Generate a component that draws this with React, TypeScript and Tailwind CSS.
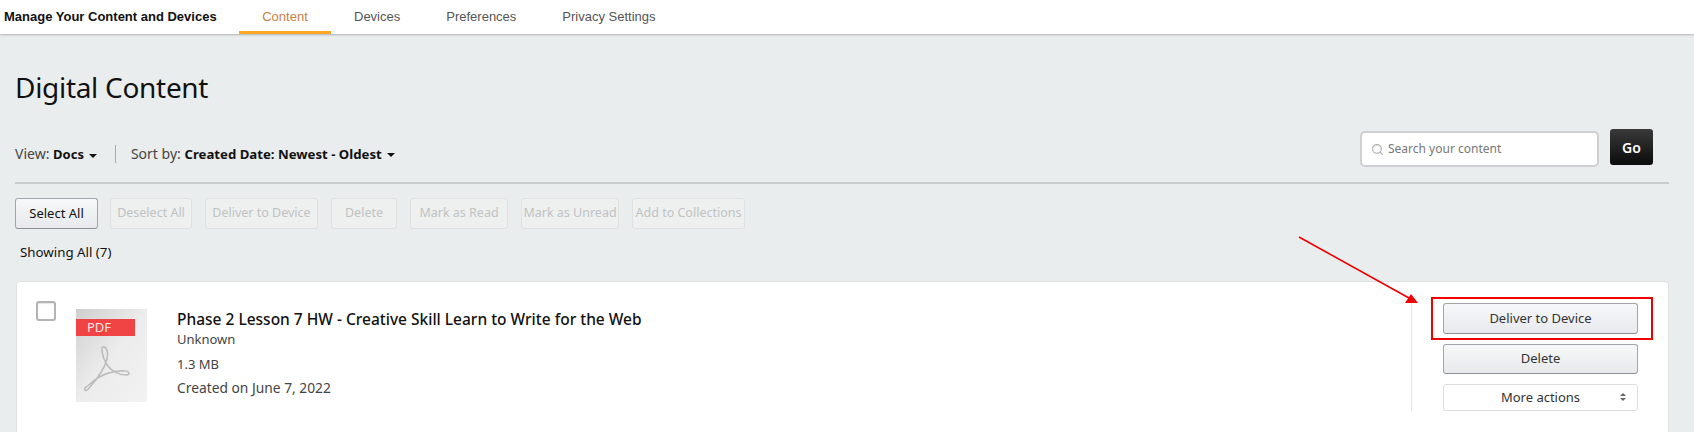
import { Search } from 'lucide-react';

const bulkActions = [
  { label: 'Deselect All', width: 'w-[82px]' },
  { label: 'Deliver to Device', width: 'w-[113px]' },
  { label: 'Delete', width: 'w-[66px]' },
  { label: 'Mark as Read', width: 'w-[98px]' },
  { label: 'Mark as Unread', width: 'w-[98px]' },
  { label: 'Add to Collections', width: 'w-[113px]' },
];

function Caret() {
  return <span className="ml-[5px] inline-block h-0 w-0 border-x-[4px] border-t-[4px] border-x-transparent border-t-[#111] align-middle" />;
}

function PdfIcon() {
  return (
    <div className="relative h-[93px] w-[71px] shrink-0 bg-gradient-to-br from-[#cfcfcf] via-[#ececec] to-[#f2f2f2]">
      <div className="absolute left-0 top-[10px] flex h-[17px] w-[59px] items-center pl-[11px] text-[13px] leading-none text-[#fbe3e3] bg-[#f04444]">
        PDF
      </div>
      <svg className="absolute inset-0" width="71" height="93" viewBox="0 0 71 93" fill="none">
        <path
          d="M9 79C8 83 11 82 14 78C21 70 29 58 31 50C33 43 30 37 27 38C25 39 26 47 30 54C35 63 44 66 50 66C55 66 53 62 49 62C39 61 24 65 14 75C11 78 9 78 9 79Z"
          stroke="#bdbdbd"
          strokeWidth="1.6"
        />
      </svg>
    </div>
  );
}

export default function App() {
  return (
    <div className="relative h-[432px] w-[1694px] overflow-hidden bg-[#eaeded] font-['Noto_Sans',sans-serif] text-[13px] text-[#111]">
      {/* top nav */}
      <div className="flex h-[34px] items-center bg-white shadow-[0_1px_2px_rgba(0,0,0,0.25)] font-['Liberation_Sans',sans-serif] text-[13px]">
        <span className="ml-[4px] w-[235px] font-bold">Manage Your Content and Devices</span>
        <div className="flex h-full w-[92px] items-center justify-center border-b-[3px] border-[#ffa724] pt-[3px] text-[#c8803f]">Content</div>
        <div className="ml-[23px] text-[#555]">Devices</div>
        <div className="ml-[46px] text-[#555]">Preferences</div>
        <div className="ml-[46px] text-[#555]">Privacy Settings</div>
      </div>

      <div className="px-[15px]">
        <h1 className="mt-[37px] text-[28px] leading-[32px] tracking-[-0.3px] text-[#111]">Digital Content</h1>

        {/* view + sort + search */}
        <div className="mt-[26px] flex h-[38px] w-[1638px] items-start">
          <div className="mt-[15px] flex h-[20px] items-center text-[14px] text-[#444]">
            <span>View: <b className="text-[13px] text-[#111]">Docs</b><Caret /></span>
            <span className="ml-[18px] h-[18px] w-px bg-[#aaa]" />
            <span className="ml-[15px]">Sort by: <b className="text-[13.2px] text-[#111]">Created Date: Newest - Oldest</b><Caret /></span>
          </div>
          <div className="ml-auto mt-[2px] flex h-[36px] w-[239px] items-center rounded-[5px] border-2 border-[#cdd0d0] bg-white pl-[9px] text-[12px] text-[#777]">
            <Search className="mr-[4px] h-[13px] w-[13px] text-[#aaa]" />
            Search your content
          </div>
          <button className="ml-[11px] h-[36px] w-[43px] rounded-[3px] bg-gradient-to-b from-[#3a3a3a] to-[#0c0c0c] text-[14px] font-semibold text-white">Go</button>
        </div>

        <div className="mt-[15px] h-[2px] w-[1654px] bg-[#c9cccc]" />

        {/* bulk actions */}
        <div className="mt-[14px] flex gap-[13px]">
          <button className="-mr-px h-[31px] w-[83px] rounded-[3px] border border-[#a2a6ac] border-b-[#8d9096] bg-gradient-to-b from-[#f7f8fa] to-[#e7e9ec]">Select All</button>
          {bulkActions.map((a) => (
            <button key={a.label} className={`h-[31px] ${a.width} whitespace-nowrap rounded-[3px] border border-[#e0e2e2] bg-[#eef0f0] text-[12.5px] text-[#bfc3c3]`}>
              {a.label}
            </button>
          ))}
        </div>

        <div className="ml-[5px] mt-[13px] h-[20px] text-[13.3px] leading-[20px]">Showing All (7)</div>

        {/* document card */}
        <div className="ml-px mt-[19px] flex h-[180px] w-[1653px] rounded-[4px] border border-[#dfe1e1] bg-white pl-[19px] pr-[30px] pt-[19px]">
          <div className="h-[20px] w-[20px] rounded-[3px] border-2 border-[#b4b4b4] shadow-[inset_0_1px_1px_rgba(0,0,0,0.1)]" />
          <div className="ml-[20px] mt-[8px]">
            <PdfIcon />
          </div>
          <div className="ml-[30px] flex-1 pt-[8px]">
            <div className="text-[15.5px] leading-[20px] font-medium">Phase 2 Lesson 7 HW - Creative Skill Learn to Write for the Web</div>
            <div className="leading-[20px] text-[#444]">Unknown</div>
            <div className="mt-[5px] leading-[20px] text-[#444]">1.3 MB</div>
            <div className="mt-[4px] text-[13.8px] leading-[20px] text-[#444]">Created on June 7, 2022</div>
          </div>
          <div className="mt-[2px] flex h-[108px] w-[227px] flex-col border-l border-[#e7e7e7] pl-[31px]">
            <div className="relative">
              <button className="h-[31px] w-[195px] rounded-[3px] border border-[#a2a6ac] border-b-[#8d9096] bg-gradient-to-b from-[#f7f8fa] to-[#e7e9ec] text-[#333]">Deliver to Device</button>
              <div className="absolute -left-[12px] -top-[6px] h-[43px] w-[222px] border-2 border-[#f00000]" />
            </div>
            <button className="mt-[10px] h-[31px] w-[195px] rounded-[3px] border border-[#a2a6ac] border-b-[#8d9096] bg-gradient-to-b from-[#f7f8fa] to-[#e7e9ec] text-[#333]">Delete</button>
            <div className="relative mt-[10px] flex h-[27px] w-[195px] items-center justify-center rounded-[3px] border border-[#dddddd] bg-white text-[#333]">
              More actions
              <span className="absolute right-[11px] top-[8px] flex flex-col gap-[2px]">
                <span className="h-0 w-0 border-x-[3px] border-b-[3px] border-x-transparent border-b-[#666]" />
                <span className="h-0 w-0 border-x-[3px] border-t-[3px] border-x-transparent border-t-[#666]" />
              </span>
            </div>
          </div>
        </div>
      </div>

      {/* annotation arrow */}
      <svg className="absolute left-[1295px] top-[232px]" width="130" height="76" viewBox="1295 232 130 76" fill="none">
        <path d="M1299 237L1409 298" stroke="#f00000" strokeWidth="1.6" />
        <path d="M1418 303L1405 303L1411 294Z" fill="#f00000" />
      </svg>
    </div>
  );
}
